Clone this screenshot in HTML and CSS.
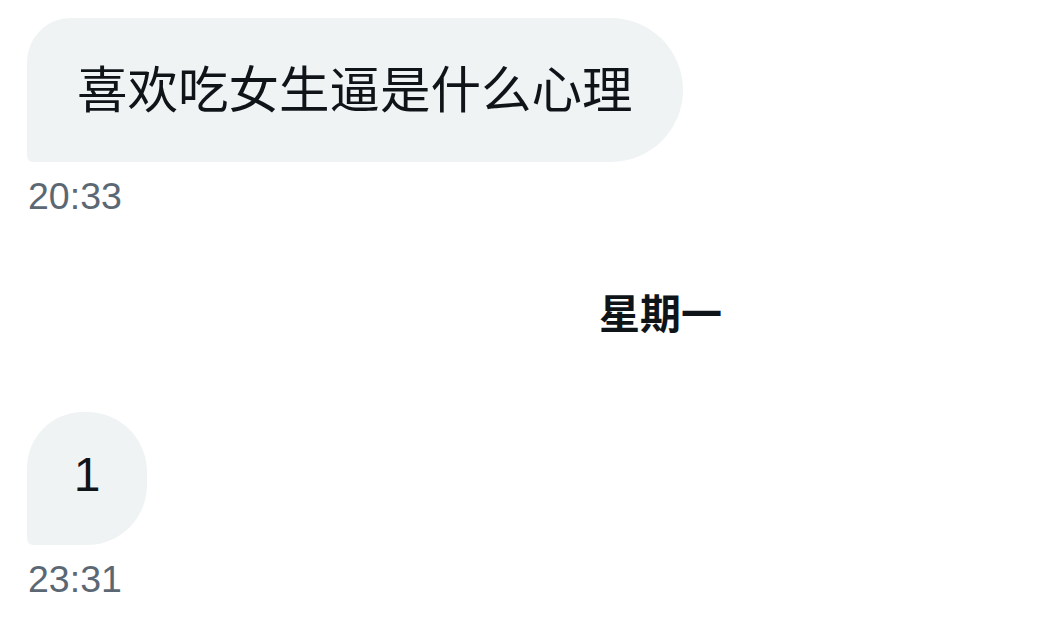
FILE: index.html
```html
<!DOCTYPE html>
<html lang="zh-CN">
<head>
  <meta charset="UTF-8">
  <title>私信</title>
  <link rel="stylesheet" href="styles.css">
</head>
<body>
  <main class="thread">
    <div class="message">
      <div class="bubble bubble-wide">喜欢吃女生逼是什么心理</div>
      <div class="time">20:33</div>
    </div>

    <div class="day">星期一</div>

    <div class="message">
      <div class="bubble bubble-short">1</div>
      <div class="time">23:31</div>
    </div>
  </main>
</body>
</html>
```

FILE: styles.css
```css
:root {
  --bubble-bg: #eff3f4;
  --text-color: #0f1419;
  --muted: #5b6874;
}

* {
  box-sizing: border-box;
  margin: 0;
  padding: 0;
}

body {
  font-family: "Liberation Sans", "Noto Sans CJK SC", sans-serif;
  color: var(--text-color);
  background: #fff;
  width: 1055px;
  height: 626px;
  overflow: hidden;
}

.thread {
  display: flex;
  flex-direction: column;
  padding: 18px 0 0 27px;
}

.message {
  display: flex;
  flex-direction: column;
  align-items: flex-start;
}

.bubble {
  background-color: var(--bubble-bg);
  font-family: "Noto Sans CJK SC", "Liberation Sans", sans-serif;
  font-size: 50.5px;
  line-height: 60px;
}

.bubble-wide {
  height: 144px;
  padding: 38px 50px 46px 50px;
  border-radius: 44px 72px 72px 6px;
}

.bubble-short {
  width: 120px;
  height: 133px;
  padding-top: 33px;
  text-align: center;
  font-family: "Liberation Sans", sans-serif;
  font-size: 48px;
  border-radius: 56px 60px 60px 6px;
}

.time {
  font-size: 37.5px;
  line-height: 44px;
  color: var(--muted);
  margin-top: 12px;
  margin-left: 1px;
}

.day {
  align-self: flex-start;
  margin: 68px 0 76px 572px;
  font-family: "Noto Sans CJK SC", sans-serif;
  font-weight: 700;
  font-size: 41px;
  line-height: 50px;
}
```
